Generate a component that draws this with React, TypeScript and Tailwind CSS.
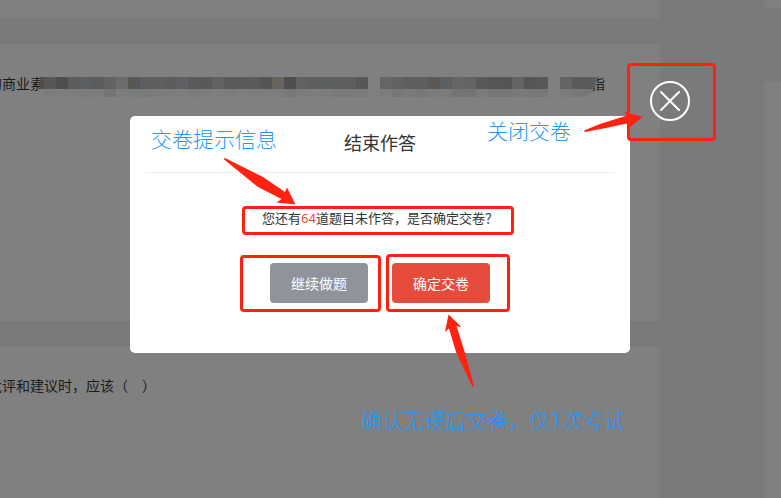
import { useState } from 'react';

const font = "font-['Noto_Sans','Noto_Sans_CJK_SC',sans-serif]";

// 题干打码区域的色块，每块 12px
const mosaicTop = [
  '#4f4f4f', '#585755', '#504d4d', '#5c5c5a', '#5c5f62', '#5c5c5c', '#636363', '#6c6c6c', '#595754',
  '#5c5f62', '#5f5f5f', '#5f5d5b', '#5f6165', '#5a5a5a', '#595959', '#626262', '#5a5a5a', '#5a5a5a',
  '#5b5b5b', '#535655', '#68655f', '#4d4f50', '#626262', '#5f5f5f', '#5c605f', '#5f5f5f', '#5e5e5e',
  '#555857', '', '#666662', '#636363', '#5f5f5f', '#5c5f5d', '#5c5854', '#5c5f63', '#666666',
  '#646464', '#5b5855', '#565656', '#565553', '#646464', '#54575a', '#585858', '', '#656565',
  '#5a5a58', '#5a5a58',
];

const mosaicBottom = [
  '', '#7c7c7c', '#7d7d7d', '#7d7d7d', '#7b7b7b', '#7c7c7c', '#757575', '#7d7d7d', '#7a7c7c',
  '#787b7b', '#7c7c7c', '#7b7c7b', '#7c7d7d', '#7b7b7b', '#7d7d7d', '#7e7e7e', '#7c7c7c', '#7e7e7e',
  '#7c7c7c', '#7c7c7c', '#7c7c7c', '#787876', '#7c7c7c', '#7d7d7d', '#7c7c7c', '#7a7a7a', '#797979',
  '#7a7a7a', '', '#7b7c7b', '#777777', '#7a7a7a', '#787878', '#7b7b7a', '#7a7b7b', '#747473',
  '#747473', '#7b7b7b', '#777776', '#777776', '#797979', '#787878', '#777777', '', '#7b7b7b',
  '#787878', '#767676',
];

function MosaicRow({ colors, className }: { colors: string[]; className: string }) {
  return (
    <div className={`-ml-2 flex ${className}`}>
      {colors.map((color, i) => (
        <span key={i} className="w-3 shrink-0" style={{ backgroundColor: color || '#7f8080' }} />
      ))}
    </div>
  );
}

// 背景中的考试页面
function ExamPage() {
  return (
    <div className="flex min-h-screen bg-[#7a7a7c] text-sm text-[#1a1a1a]">
      <main className="flex min-w-0 flex-1 flex-col gap-[26px] overflow-hidden">
        <section className="h-[18px] shrink-0 bg-[#808080]" />
        <section className="h-[277px] shrink-0 bg-[#808080] pt-[30px]">
          <div className="relative flex h-5 items-center whitespace-nowrap">
            <p className="-ml-3">的商业素</p>
            <p className="ml-[547px]">指</p>
            <div className="absolute top-[3px] left-10 overflow-hidden rounded-br-2xl rounded-bl-lg">
              <MosaicRow colors={mosaicTop} className="h-3" />
              <MosaicRow colors={mosaicBottom} className="h-2" />
            </div>
          </div>
        </section>
        <section className="flex-1 bg-[#808080] pt-[29px]">
          <p className="-ml-3 leading-5 whitespace-nowrap">批评和建议时，应该（　）</p>
        </section>
      </main>
      <aside className="ml-[104px] w-[17px] shrink-0 bg-[#808080] pt-2">
        <div className="h-[74px] bg-[#7b7b7b]" />
      </aside>
    </div>
  );
}

function Frame({ className }: { className: string }) {
  return <span className={`pointer-events-none absolute rounded-sm border-3 border-[#ff2211] ${className}`} />;
}

function Note({ className, children }: { className: string; children: string }) {
  return (
    <p className={`pointer-events-none absolute text-[21px] leading-[30px] font-light whitespace-nowrap text-[#1e98ff] ${className}`}>
      {children}
    </p>
  );
}

export default function App() {
  const [open, setOpen] = useState<boolean>(true);
  const close = () => setOpen(false);

  return (
    <div className={`relative overflow-hidden ${font}`}>
      <ExamPage />

      {open && (
        <div className="absolute inset-0 flex items-start justify-center pt-[116px] pr-[21px]">
          <div role="dialog" aria-labelledby="dialog-title" className="relative w-[500px] rounded-[5px] bg-white px-[15px] pb-[50px] text-[#333]">
            <h2 id="dialog-title" className="border-b border-[#eee] pt-[13px] pb-[15px] text-center text-lg">
              结束作答
            </h2>
            <p className="mt-[35px] text-center text-[13px] leading-5">
              您还有<span className="text-[#e64c3c]">64</span>道题目未作答，是否确定交卷？
            </p>
            <div className="mt-[35px] flex justify-center gap-6 text-sm text-white">
              <button type="button" onClick={close} className="h-10 w-[98px] rounded-sm bg-[#90939b] pt-0.5">
                继续做题
              </button>
              <button type="button" onClick={close} className="h-10 w-[98px] rounded-sm bg-[#e64c3c] pt-0.5">
                确定交卷
              </button>
            </div>

            {/* 关闭按钮 */}
            <button type="button" aria-label="关闭" onClick={close} className="absolute -top-9 left-[519px] size-[42px]">
              <svg viewBox="0 0 42 42" fill="none" stroke="#fff" strokeWidth="2" strokeLinecap="round">
                <circle cx="21" cy="21" r="19" />
                <path d="M12 12L30 30M30 12L12 30" />
              </svg>
            </button>

            {/* 标注 */}
            <Frame className="top-[90px] left-28 h-[29px] w-[272px]" />
            <Frame className="top-[139px] left-[110px] h-[57px] w-[141px]" />
            <Frame className="top-[138px] left-64 h-[58px] w-[124px]" />
            <Frame className="-top-[53px] left-[497px] h-[78px] w-[89px]" />
            <Note className="top-2 left-[21px]">交卷提示信息</Note>
            <Note className="top-0 left-[357px]">关闭交卷</Note>
            <Note className="top-[289px] left-[231px]">确认无误后交卷，仅1次考试</Note>
            <svg
              className="pointer-events-none absolute top-0 left-0 h-[237px] w-[500px] overflow-visible"
              viewBox="130 116 500 237"
              fill="#ff2211"
            >
              <path d="M223.500 159L225 158L263 177L285 192L287 187.500L295.500 204.500L276.500 202.500L281.500 199L258 187Z" />
              <path d="M584 130.500L600 124L627 115.500L624 111.500L642.500 117L629 128L626.500 123.500L606 128L585 132Z" />
              <path d="M448.500 314.500L461.500 327L456.500 326L465 353L474 386L472.500 387L456 352L449 328.500L445 332Z" />
            </svg>
          </div>
        </div>
      )}
    </div>
  );
}
